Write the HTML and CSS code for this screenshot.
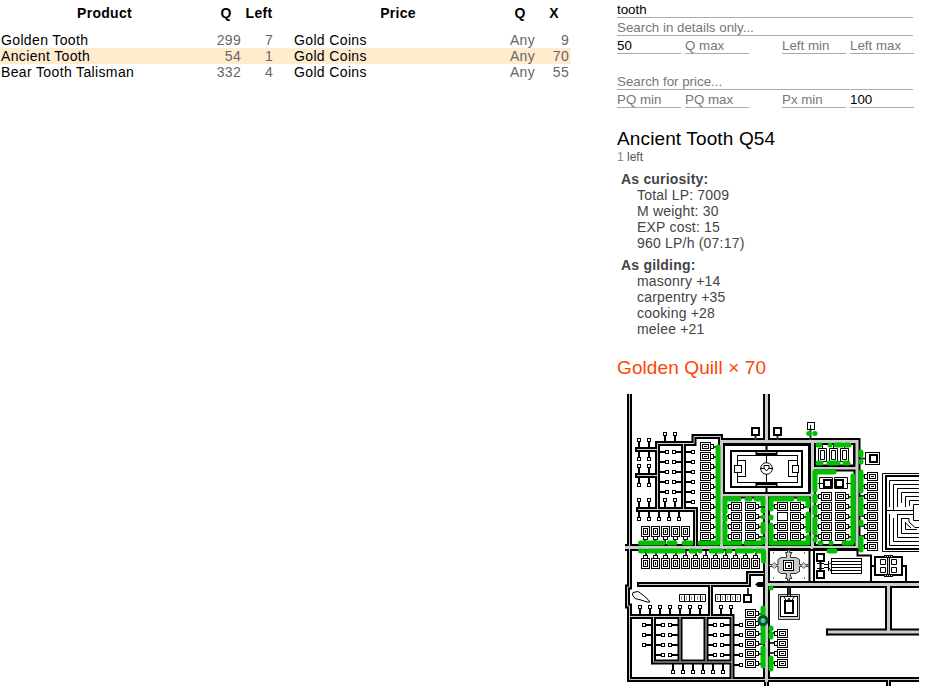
FILE: index.html
```html
<!DOCTYPE html>
<html lang="en">
<head>
<meta charset="utf-8">
<title>Market search</title>
<link rel="stylesheet" href="styles.css">
</head>
<body>
<div class="page">
  <main class="results">
    <table class="offers">
      <colgroup><col class="c-name"><col class="c-q"><col class="c-left"><col class="c-gap"><col class="c-price"><col class="c-q"><col class="c-q"></colgroup>
      <thead><tr><th>Product</th><th>Q</th><th>Left</th><th></th><th>Price</th><th>Q</th><th>X</th></tr></thead>
      <tbody>
        <tr><td>Golden Tooth</td><td class="num">299</td><td class="num">7</td><td></td><td>Gold Coins</td><td class="num">Any</td><td class="num">9</td></tr>
        <tr class="selected"><td>Ancient Tooth</td><td class="num">54</td><td class="num">1</td><td></td><td>Gold Coins</td><td class="num">Any</td><td class="num">70</td></tr>
        <tr><td>Bear Tooth Talisman</td><td class="num">332</td><td class="num">4</td><td></td><td>Gold Coins</td><td class="num">Any</td><td class="num">55</td></tr>
      </tbody>
    </table>
  </main>
  <aside class="side">
    <form class="filters">
      <input class="wide" value="tooth">
      <input class="wide" placeholder="Search in details only...">
      <div class="row"><input value="50"><input placeholder="Q max"><input class="second" placeholder="Left min"><input placeholder="Left max"></div>
      <input class="wide price" placeholder="Search for price...">
      <div class="row"><input placeholder="PQ min"><input placeholder="PQ max"><input class="second" placeholder="Px min"><input value="100"></div>
    </form>
    <h1 class="title">Ancient Tooth Q54</h1>
    <div class="stock"><span>1</span> left</div>
    <section class="info">
      <h2>As curiosity:</h2>
      <ul><li>Total LP: 7009</li><li>M weight: 30</li><li>EXP cost: 15</li><li>960 LP/h (07:17)</li></ul>
      <h2>As gilding:</h2>
      <ul><li>masonry +14</li><li>carpentry +35</li><li>cooking +28</li><li>melee +21</li></ul>
    </section>
    <div class="cost">Golden Quill × 70</div>
    <svg class="map" id="map" width="302" height="295" viewBox="617 392 302 295">
      <defs>
        <g id="house">
          <path class="wire" d="M7 0H12"/>
          <rect class="box" x="4.5" y="-2.5" width="3" height="4"/>
          <rect class="box" x="-5.5" y="-4.5" width="10" height="8"/>
          <rect class="box" x="-3.5" y="-2.5" width="6" height="4"/>
          <path class="thin" d="M-2-.5H1"/>
        </g>
        <g id="node"><path class="wire2" d="M2 0H8"/><rect class="box" x="-1.5" y="-1.5" width="3" height="3"/></g>
        <path id="narrow" d="M629.5 394V587H627.5V606H629.5V679.5H919M637 449.5H658M637 475.5H658M657.5 509V443.5H694V436.5H720.5V442M683.5 443V509M637 509.5H695.5V546M639 584.5H748.5V573.5H764M710.5 585V616M629 616.5H732V679M653.5 616V662H732M680 617V661M706 617V661M766.500 680V686M888.500 680V686"/>
        <path id="wideRoad" d="M766.500 394V441.500M721 441.500H857V547.500H625M812.500 441V548M721.500 442V547M721 495H813M812 468H857M766.500 495V682M766 584.500H919M888.500 584V632M827 632H919"/>
      </defs>
      <use href="#narrow" class="road-edge n"/><use href="#wideRoad" class="road-edge w"/>
      <use href="#narrow" class="road-core n"/><use href="#wideRoad" class="road-core w"/>
      <path class="cap" d="M636 447V452M636 473V478M637 507V512M638 582V587M827 628.500V635.500"/>

      <g class="court">
        <rect class="thick" x="724" y="445" width="85" height="48"/>
        <path class="wire2" d="M766.500 445V451M766.500 487V493"/>
        <rect class="thick" x="731" y="451" width="71" height="36"/>
        <rect class="box" x="737.500" y="455.500" width="60" height="27"/>
        <path class="thin" d="M766.500 455V483"/>
        <rect class="box" x="737.500" y="460.500" width="8" height="16"/><rect class="box" x="788.500" y="460.500" width="9" height="16"/>
        <rect class="box" x="734.500" y="465.500" width="7" height="7"/><rect class="box" x="792.500" y="465.500" width="6" height="7"/>
        <circle class="box" cx="766.500" cy="468.500" r="5.800"/>
        <path class="thin" d="M764 465.500H769V468L766.500 471L764 468ZM760 468.500H764M769 468.500H773"/>
        <path class="bars" d="M755.500 453H777.500M755.500 485H777.500"/>
        <path class="slit" d="M757 452.500H776M757 485.500H776"/>
      </g>

      <path class="thick none" d="M769 549H809.500V582H769ZM814 582V549H857.500V555.500H871V582"/>
      <path class="stone" d="M769 564.500H778V559.500L781 557.500H786.500V555L785.500 552.500H787.500V550H789.500V552.500H792L790.500 555V557.500H796L799.500 559.500V564.500H809V566.500H799.500V571.500L796 573.500H790.500V576L792 578.500H789.500V581H787.500V578.500H785.500L786.500 576V573.500H781L778 571.500V566.500H769Z"/>
      <path class="leaf" d="M771 565.500L774.500 562.500L777 565.500L774.500 568.500ZM801 565.500L803.500 562.500L807 565.500L803.500 568.500Z"/>
      <rect class="box" x="783.500" y="560.500" width="10" height="10"/><rect class="box" x="785.500" y="562.500" width="6" height="6"/><rect class="solid" x="788" y="565" width="2" height="2"/>
      <path class="dots" d="M773 553H774M804 553H805M773 578H774M804 578H805"/>

      <path class="wire2" d="M820.500 562V570"/><path class="thin" d="M817 563.500H824M817 568.500H824M824 564.500H829L831 562.500M824 567.500H829L831 571.500"/>
      <rect class="thick" x="817" y="554" width="7" height="7"/><rect class="thick" x="817" y="571" width="7" height="7"/>
      <rect class="box" x="831.500" y="558.500" width="30" height="15"/>
      <path class="thin" d="M831 561.500H861M831 564.500H861M831 567.500H861M831 570.500H861M828.500 561V571"/>

      <path class="thick none" d="M871 566H875M902 566H906V582"/>
      <rect class="thick" x="875" y="557" width="27" height="18"/><path class="road-dark" d="M888.500 556V576"/><path class="road-light" d="M888.500 556V576"/>
      <path class="bars thinbar" d="M884 556.500H893M884 575.500H893"/><path class="slit dash" d="M885 556.500H893M885 575.500H893"/>
      <path class="box" d="M880.500 559.500H885.500V564.500H880.500ZM891.500 559.500H896.500V564.500H891.500ZM880.500 567.500H885.500V572.500H880.500ZM891.500 567.500H896.500V572.500H891.500Z"/>

      <path class="thin" d="M919 473.500H882.500V551.500H919M919 480.500H889.500V507M919 484.500H893.500V510M919 488.500H897.500V507M919 492.500H901.500V503M919 496.500H905.500V507M919 500.500H909.500V506M886 510.500H913.500M919 504.500H913.500V520.500H919M889.500 514V545.500H919M893.500 518V541.500H919M897.500 514.500V537.500H919M897 514.500H913M901.500 518V533.500H919M901 518.500H909V522L915 527.500H919M905.500 522V529.500H917M905 522.500L911 528"/>
      <path class="thick none" d="M919 476H886V549H919"/>

      <path class="wire" d="M755.500 435V440M777.500 435V440M810.500 430V440M748 588V595M789 588V596M860 458.500H866"/>
      <rect class="thick" x="752" y="428" width="7" height="7"/><rect class="thick" x="774" y="428" width="7" height="7"/>
      <rect class="box" x="807.500" y="422.500" width="7" height="7"/><path class="thin" d="M810.500 425V430"/>
      <rect class="box" x="865.500" y="452.500" width="14" height="12"/><rect class="thick" x="870" y="455" width="7" height="7"/>
      <path class="thick none" d="M815 444V466H854V444Z"/>
      <path class="box" d="M818.500 448.500H826.500V461.500H818.500ZM820.500 450.500H824.500V459.500H820.500ZM829.500 448.500H837.500V461.500H829.500ZM831.500 450.500H835.500V459.500H831.500ZM840.500 448.500H848.500V461.500H840.500ZM842.500 450.500H846.500V459.500H842.500ZM822.500 445V448M833.500 445V448M844.500 445V448M822.500 462V465M833.500 462V465M844.500 462V465"/>
      <path class="box" d="M818 483.500H823M846 483.500H852M819.500 477.500H832.500V488.500H819.500ZM834.500 477.500H847.500V488.500H834.500Z"/>
      <rect class="thick" x="824" y="480" width="7" height="7"/><rect class="thick" x="836" y="480" width="7" height="7"/>
      <rect class="box" x="777.500" y="512.500" width="10" height="8"/>

      <path class="box" d="M679.500 594.500H705.500V601.500H679.500ZM684.500 594V602M689.500 594V602M694.500 594V602M700.500 594V602"/>
      <path class="box" d="M715.500 594.500H740.500V601.500H715.500ZM720.500 594V602M725.500 594V602M730.500 594V602M735.500 594V602"/>
      <path class="faint" d="M681.500 596V600M686.500 596V600M691.500 596V600M697.500 596V600M702.500 596V600M717.500 596V600M722.500 596V600M727.500 596V600M732.500 596V600M737.500 596V600"/>
      <rect class="thick" x="744" y="595" width="7" height="7"/>
      <path class="solid" d="M755 584.500L758 582H763V587H758Z"/>
      <path class="box" d="M633 592.500L638 591.500L643 595L648 599.500L650 602L647 602L641 600L635 598.500L632.500 595Z"/>
      <rect class="stone" x="778.500" y="594.500" width="21" height="25"/><rect class="box" x="780.500" y="596.500" width="17" height="20"/>
      <rect class="thick" x="785" y="601" width="8" height="12"/><path class="thin" d="M784 597L787 602L789 598L791 602L794 597"/>
      <path class="thin" d="M787.500 588V596M790.500 588V596"/>

      <g id="homes"></g>
      <g id="nodes"></g>
      <path class="green" d="M718 447V541M640.500 543H663M669 543H675M684 543H691M700 543H718M640.500 551H643M648 551H683M691 551H695M700 551H700.100M711 551H722M728 551H730M737 551H752M757 551H763M763.500 552V561
        M725 499V512M725 517V520M725 525V541M725 499H739M747 499H750M756 499H763M763 500V504M763 510V511M763 517V517.100M763 524V532M763 539V542M725 543H740M746 543H761
        M771 499V509M771 517V518M771 525V542M771 499H792M799 499H807.500M808 500V506M808 514V531M808 537V542M771 543H808
        M815 472V490M815 496V501M815 507V513M815 519V533M815 539V540M815 472H834M853 476V541M820 543H821M831 543H831.100M844 543H852
        M818 445H820M830 445H830.100M836 445H842M845 445H849M818 463H821M829 463H838M845 463H848
        M861 452V455M861 461.500V462M861 472V491M861 499V514M861 522V524M861 538V550M829 551H835M808.700 433.500H809M814.700 433.500H815
        M763 608V630M763 632V642M763 648V666M771 588H771.100M771 628V629M771 634V637M771 658V669"/>
      <circle class="marker" cx="763" cy="620.500" r="4"/>
    </svg>
  </aside>
</div>
<script src="map.js"></script>
</body>
</html>
```

FILE: styles.css
```css
body { margin: 0; background: #fff; color: #000; font: 14px/16px "Liberation Sans", Arial, sans-serif; letter-spacing: .2px; overflow: hidden; }
.page { display: flex; height: 687px; overflow: hidden; }
.results { width: 617px; flex: none; }
.offers { width: 571px; table-layout: fixed; border-collapse: collapse; }
.offers th, .offers td { padding: 0 2px 0 1px; height: 16px; white-space: nowrap; }
.offers td { letter-spacing: .36px; }
.offers th { height: 32px; padding: 0; vertical-align: top; padding-top: 5px; box-sizing: border-box; letter-spacing: .3px; }
.c-name { width: 209px; } .c-q { width: 34px; } .c-left { width: 32px; } .c-gap { width: 18px; } .c-price { width: 210px; }
.offers .num { text-align: right; color: #666; letter-spacing: .3px; }
.selected { background: #ffebcd; }
.side { width: 302px; flex: none; }
.filters { display: block; margin: 0; }
input { display: block; box-sizing: border-box; width: 64px; height: 18px; padding: 1px 0 0; margin: 0; border: 0; border-bottom: 1px solid #aaa; border-radius: 0; background: none; color: #000; font: 13.333px/16px "Liberation Sans", Arial, sans-serif; letter-spacing: 0; outline: 0; }
input::placeholder { color: #777; opacity: 1; }
.wide { width: 296px; }
.price { margin-top: 18px; }
.row { display: flex; gap: 4px; }
.second { margin-left: 29px; }
.title { margin: 20px 0 0; font-size: 19px; line-height: 22px; font-weight: 400; letter-spacing: .13px; }
.stock { font-size: 12px; line-height: 14px; color: #555; letter-spacing: 0; }
.stock span { color: #888; }
.info { color: #444; padding: 7px 0 0 4px; }
.info h2 { margin: 0; font-size: 14px; line-height: 16px; }
.info ul { list-style: none; margin: 0 0 6px; padding: 0 0 0 16px; }
.cost { margin-top: 20px; font-size: 19px; line-height: 22px; color: #ff4500; letter-spacing: .1px; }
.map { display: block; margin-top: 13px; }
.road-edge, .road-core { fill: none; }
.road-edge { stroke: #000; } .road-core { stroke: #ccc; }
.road-edge.n { stroke-width: 5px; } .road-core.n { stroke-width: 1px; }
.road-edge.w { stroke-width: 7px; } .road-core.w { stroke-width: 3px; }
.cap { stroke: #000; stroke-width: 2px; }
.box { fill: #fff; stroke: #000; stroke-width: 1px; }
.thick { fill: #fff; stroke: #000; stroke-width: 2px; }
.none, .thin { fill: none; }
.thin { stroke: #000; stroke-width: 1px; }
.faint { fill: none; stroke: #999; stroke-width: 1px; }
.wire { stroke: #333; stroke-width: 2px; }
.wire2 { stroke: #000; stroke-width: 2px; }
.bars { stroke: #000; stroke-width: 5px; }
.thinbar { stroke-width: 3px; }
.slit { stroke: #ccc; stroke-width: 1px; }
.dash { stroke-dasharray: 1px 1px; }
.stone { fill: #ccc; stroke: #333; stroke-width: 1px; }
.leaf { fill: #ccc; stroke: #666; stroke-width: 1px; }
.dots { stroke: #000; stroke-width: 1px; }
.solid { fill: #000; }
.road-dark { stroke: #000; stroke-width: 3px; }
.road-light { stroke: #ccc; stroke-width: 1px; }
.green { fill: none; stroke: #00c000; stroke-width: 5px; stroke-linecap: round; }
.marker { fill: #30e080; stroke: #184832; stroke-width: 3px; }
```

FILE: map.js
```js
const NS = "http://www.w3.org/2000/svg";
function put(layer, symbol, xs, ys, angle) {
  for (const x of xs) for (const y of ys) {
    const u = document.createElementNS(NS, "use");
    u.setAttribute("href", "#" + symbol);
    u.setAttribute("transform", `translate(${x} ${y}) rotate(${angle})`);
    document.getElementById(layer).append(u);
  }
}
const run = (start, count) => Array.from({ length: count }, (_, i) => start + i * 10);
const RIGHT = 0, DOWN = 90, LEFT = 180, UP = 270;

put("homes", "house", [706], run(447, 10), RIGHT);
put("homes", "house", [736], run(506, 4), LEFT);
put("homes", "house", [751], run(507, 4), RIGHT);
put("homes", "house", [782], [506, 526, 536], LEFT);
put("homes", "house", [796], run(507, 4), RIGHT);
put("homes", "house", [826], run(496, 5), LEFT);
put("homes", "house", [841], run(497, 5), RIGHT);
put("homes", "house", [872], run(476, 8), LEFT);
put("homes", "house", run(645, 5), [532], DOWN);
put("homes", "house", run(646, 12), [563], UP);
put("homes", "house", [751], run(614, 6), RIGHT);
put("homes", "house", [782], run(633, 4), LEFT);

put("nodes", "node", [639, 649], [440, 466, 500], DOWN);
put("nodes", "node", [639, 649], [459, 485], UP);
put("nodes", "node", [665, 675], [434, 500], DOWN);
put("nodes", "node", [667], run(452, 5), LEFT);
put("nodes", "node", [674], run(452, 5), RIGHT);
put("nodes", "node", [693], run(452, 6), LEFT);
put("nodes", "node", run(639, 5), [519], UP);
put("nodes", "node", run(640, 7), [607], DOWN);
put("nodes", "node", [721, 731], [607], DOWN);
put("nodes", "node", [644], run(625, 3), RIGHT);
put("nodes", "node", [663, 715], run(625, 4), LEFT);
put("nodes", "node", [670, 722], run(625, 4), RIGHT);
put("nodes", "node", [741], run(625, 5), LEFT);
put("nodes", "node", run(673, 6), [672], UP);
```
